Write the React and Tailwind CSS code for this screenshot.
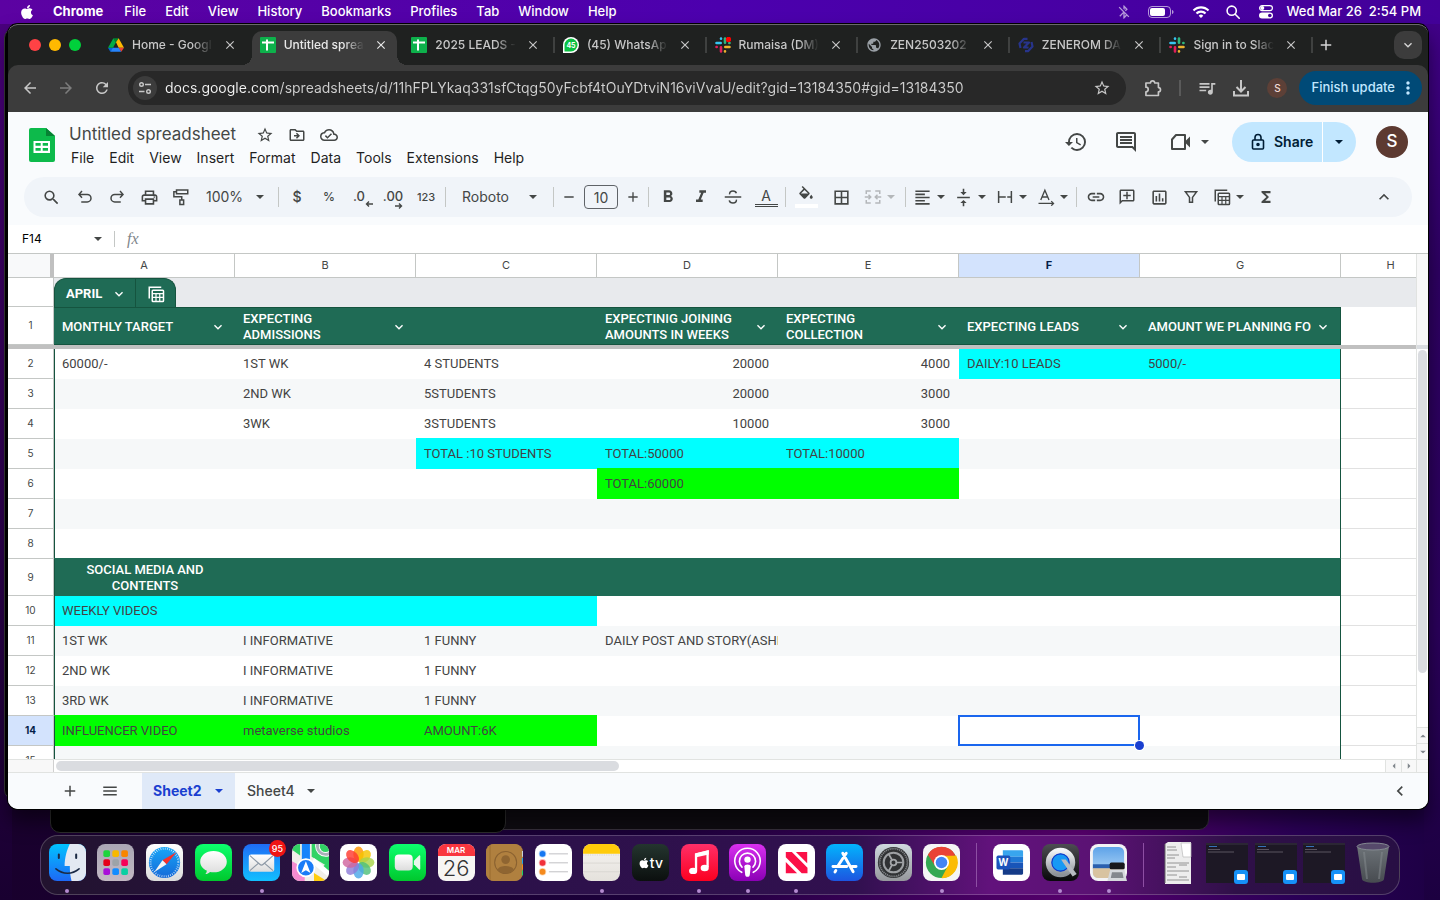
import React from "react";
import {
  MdSearch, MdOutlinePrint, MdFormatBold, MdFormatItalic, MdBorderAll, MdFormatAlignLeft,
  MdVerticalAlignCenter, MdLink, MdOutlineAddComment, MdOutlineInsertChart, MdHistory,
  MdOutlineComment, MdStarBorder, MdOutlineDriveFileMove, MdOutlineCloudDone,
  MdQueueMusic, MdAdd, MdRemove, MdClose, MdMenu,
  MdMoreVert, MdPublic, MdWifi, MdArrowBack, MdArrowForward, MdRefresh, MdExpandLess,
  MdExpandMore, MdChevronLeft, MdFunctions, MdBluetoothDisabled,
} from "react-icons/md";
import { FaApple } from "react-icons/fa";

/* ---------- small shared drawings ---------- */

function Caret({ className = "" }) {
  return (
    <svg viewBox="0 0 8 4" className={`h-1 w-2 shrink-0 ${className}`} fill="currentColor" aria-hidden="true">
      <path d="M0 0h8L4 4z" />
    </svg>
  );
}

function Glyph({ d, size = "size-5", stroke = false, children }) {
  return (
    <svg
      viewBox="0 0 24 24"
      className={size}
      fill={stroke ? "none" : "currentColor"}
      stroke={stroke ? "currentColor" : "none"}
      strokeWidth={stroke ? 2 : 0}
      aria-hidden="true"
    >
      {d ? <path d={d} /> : null}
      {children}
    </svg>
  );
}

const Sep = ({ className = "mx-0.5" }) => <span className={`h-5 w-px shrink-0 bg-[#c4c7c5] ${className}`} />;

/* ---------- menu bar ---------- */

const MENUS = ["File", "Edit", "View", "History", "Bookmarks", "Profiles", "Tab", "Window", "Help"];

function MenuBar() {
  return (
    <header className="flex h-6 shrink-0 items-center bg-[linear-gradient(90deg,#5c02a2,#4c00ae_50%,#430099)] pr-[19px] pl-[19px] text-[13px] font-medium text-white">
      <button aria-label="Apple menu" className="w-[34px]"><FaApple className="size-4" /></button>
      <nav className="flex items-center gap-[19px]">
        <button className="mr-0.5 font-bold">Chrome</button>
        {MENUS.map((m) => <button key={m}>{m}</button>)}
      </nav>
      <div className="ml-auto flex items-center">
        <MdBluetoothDisabled className="mr-4 size-4 opacity-60" />
        <svg viewBox="0 0 26 12" className="mr-[18px] h-3 w-[26px]" aria-hidden="true">
          <rect x=".5" y=".5" width="22" height="11" rx="3.5" fill="none" stroke="#fff" strokeOpacity=".6" />
          <rect x="2" y="2" width="15" height="8" rx="2" fill="#fff" />
          <path d="M24 4v4c1-.3 1.500-1 1.500-2S25 4.300 24 4z" fill="#fff" fillOpacity=".6" />
        </svg>
        <MdWifi className="mr-4 size-[18px]" />
        <svg viewBox="0 0 14 14" className="mr-[18px] size-[14px]" fill="none" stroke="#fff" strokeWidth="1.600" aria-hidden="true">
          <circle cx="5.700" cy="5.700" r="4.600" /><path d="M9.200 9.200l4 4" strokeLinecap="round" />
        </svg>
        <svg viewBox="0 0 16 14" className="mr-3 h-[14px] w-4" aria-hidden="true">
          <rect x="1.600" y=".6" width="12.800" height="5" rx="2.500" fill="none" stroke="#fff" strokeWidth="1.200" />
          <circle cx="4.300" cy="3.100" r="2" fill="#fff" />
          <rect x="1" y="7.500" width="14" height="6" rx="3" fill="#fff" />
          <circle cx="11.800" cy="10.500" r="1.800" fill="#430099" />
        </svg>
        <time className="whitespace-pre">Wed Mar 26  2:54 PM</time>
      </div>
    </header>
  );
}

/* ---------- browser tabs ---------- */

const DriveIcon = () => (
  <svg viewBox="0 0 24 24" className="size-4" aria-hidden="true">
    <path fill="#0066da" d="M0 16l3.500 6 5-6z" /><path fill="#00ac47" d="M8 2L0 16h7.500L12 8z" />
    <path fill="#00832d" d="M8 2h8l-4 7z" /><path fill="#ffba00" d="M16 2l8 14h-8L12 8z" />
    <path fill="#2684fc" d="M7.500 16h9L20 22H3.500z" /><path fill="#ea4335" d="M16 16h8l-4 6z" />
  </svg>
);
const SheetsFav = () => (
  <svg viewBox="0 0 16 16" className="size-4" aria-hidden="true">
    <rect width="16" height="16" rx="1" fill="#0db14b" />
    <path d="M2 5.500h12M7 2.500v11" stroke="#fff" strokeWidth="2" />
  </svg>
);
const WhatsFav = () => (
  <svg viewBox="0 0 16 16" className="size-4" aria-hidden="true">
    <path d="M0 16V8a8 8 0 118 8z" fill="#fff" /><path d="M1.500 14.500V8A6.500 6.500 0 118 14.500z" fill="#0bc143" />
    <text x="8" y="10.500" textAnchor="middle" fontSize="7" fontWeight="700" fill="#fff" fontFamily="Inter">45</text>
  </svg>
);
const SlackFav = ({ dot }) => (
  <svg viewBox="0 0 16 16" className="size-4" aria-hidden="true">
    <g fill="none" strokeWidth="2.600" strokeLinecap="round">
      <path d="M1.500 6h4.200M6 1.500v.2" stroke="#36c5f0" /><path d="M10 1.500v4.300M14.300 6h.2" stroke="#2eb67d" />
      <path d="M10.300 10h4.200M10 14.300v.2" stroke="#ecb22e" /><path d="M6 10.200v4.300M1.500 10h.2" stroke="#e01e5a" />
    </g>
    {dot ? <circle cx="13.500" cy="2.500" r="2.700" fill="#f00" /> : null}
  </svg>
);
const ZenFav = () => (
  <svg viewBox="0 0 16 16" className="size-4" fill="none" stroke="#27348b" strokeWidth="2.200" strokeLinejoin="round" aria-hidden="true">
    <path d="M9.500 1.800L6 1.800 1.500 6.500 2.500 11M5.500 5.500h5.500L6 10.500h4.500M13.500 5l1 4.500-4.500 4.700H7" />
  </svg>
);

const TABS = [
  { t: "Home - Googl", icon: <DriveIcon /> },
  { t: "Untitled sprea", icon: <SheetsFav />, active: true },
  { t: "2025 LEADS -", icon: <SheetsFav />, sep: true },
  { t: "(45) WhatsAp", icon: <WhatsFav />, sep: true },
  { t: "Rumaisa (DM)", icon: <SlackFav dot />, sep: true },
  { t: "ZEN2503202", icon: <MdPublic className="size-4 text-[#9aa0a6]" />, sep: true },
  { t: "ZENEROM DA", icon: <ZenFav />, sep: true },
  { t: "Sign in to Slac", icon: <SlackFav />, sep: true },
];

function TabStrip() {
  return (
    <div className="flex h-10 items-end bg-[#1f2120]">
      <div className="flex h-full w-[92px] shrink-0 items-center gap-2 pl-[21px]">
        <button aria-label="Close window" className="size-3 rounded-full bg-[#ff4245]" />
        <button aria-label="Minimise window" className="size-3 rounded-full bg-[#ffb900]" />
        <button aria-label="Zoom window" className="size-3 rounded-full bg-[#00d03b]" />
      </div>
      <div className="flex min-w-0 flex-1">
        {TABS.map((tab) => (
          <div key={tab.t} className="relative flex h-[34px] min-w-0 flex-1 pr-[6px]">
            <div
              className={`relative flex h-full min-w-0 flex-1 items-center pr-2 pb-[6px] pl-2 ${
                tab.active ? "rounded-t-[10px] bg-[#3c3c3c] text-[#e8e8e8]" : "text-[#c7c7c7]"
              }`}
            >
              {tab.active && (
                <>
                  <span className="absolute bottom-0 -left-[10px] size-[10px] bg-[radial-gradient(circle_at_0_0,transparent_10px,#3c3c3c_10px)]" />
                  <span className="absolute -right-[10px] bottom-0 size-[10px] bg-[radial-gradient(circle_at_100%_0,transparent_10px,#3c3c3c_10px)]" />
                </>
              )}
              <span className="shrink-0">{tab.icon}</span>
              <span className="ml-2 min-w-0 flex-1 overflow-hidden text-xs font-medium whitespace-nowrap [mask-image:linear-gradient(90deg,#000_75%,transparent)]">
                {tab.t}
              </span>
              <button aria-label={`Close ${tab.t}`} className="ml-[9px] flex size-4 shrink-0 items-center justify-center">
                <MdClose className="size-[14px]" />
              </button>
            </div>
            {tab.sep && <span className="absolute top-[6px] right-0 h-4 w-[2px] bg-[#3f4140]" />}
          </div>
        ))}
      </div>
      <div className="flex h-full w-[115px] shrink-0 items-center justify-between pr-[6px] pl-1 text-[#d5d5d5]">
        <button aria-label="New tab"><MdAdd className="size-[18px]" /></button>
        <button aria-label="Search tabs" className="flex size-7 items-center justify-center rounded-[10px] bg-[#3c3c3c]">
          <MdExpandMore className="size-4" />
        </button>
      </div>
    </div>
  );
}

function AddressBar() {
  return (
    <div className="flex h-[47px] items-center rounded-t-[10px] bg-[#3c3c3c] pr-[6px] pb-px text-[#c7c7c7]">
      <button aria-label="Back" className="ml-1 flex w-9 justify-center"><MdArrowBack className="size-[18px]" /></button>
      <button aria-label="Forward" className="flex w-9 justify-center text-[#7d7d7d]"><MdArrowForward className="size-[18px]" /></button>
      <button aria-label="Reload" className="flex w-9 justify-center"><MdRefresh className="size-[18px]" /></button>
      <div className="ml-2 flex h-[34px] min-w-0 flex-1 items-center rounded-full bg-[#282828] pr-[15px] pl-[5px]">
        <button aria-label="View site information" className="flex size-6 shrink-0 items-center justify-center rounded-full bg-[#3c3c3c]">
          <svg viewBox="0 0 14 14" className="size-[14px]" fill="none" stroke="currentColor" strokeWidth="1.400" aria-hidden="true">
            <circle cx="3.500" cy="3.500" r="1.800" /><path d="M7 3.500h6M1 10.500h5.500" /><circle cx="10.500" cy="10.500" r="1.800" />
          </svg>
        </button>
        <input
          aria-label="Address"
          defaultValue="docs.google.com/spreadsheets/d/11hFPLYkaq331sfCtqg50yFcbf4tOuYDtviN16viVvaU/edit?gid=13184350#gid=13184350"
          className="ml-2 min-w-0 flex-1 bg-[linear-gradient(90deg,#f2f2f2_112px,#cfcfcf_112px)] bg-clip-text text-sm text-transparent outline-none"
        />
        <button aria-label="Bookmark this tab"><MdStarBorder className="size-[18px]" /></button>
      </div>
      <button aria-label="Extensions" className="ml-[17px]">
        <Glyph size="size-5" stroke><path d="M3.500 6H9a2.500 2.500 0 015 0h4.500v5.500a2.500 2.500 0 010 5V21h-15v-4.500a2.700 2.700 0 000-5.500z" strokeLinejoin="round" /></Glyph>
      </button>
      <span className="mx-4 h-4 w-[2px] bg-[#5a5a5a]" />
      <button aria-label="Media controls"><MdQueueMusic className="size-5" /></button>
      <button aria-label="Downloads" className="ml-3">
        <Glyph size="size-6" stroke><path d="M12 4v11.500M7.500 11l4.500 4.500 4.500-4.500M5 15v4.500h14V15" /></Glyph>
      </button>
      <button aria-label="Profile" className="ml-[14px] flex size-5 items-center justify-center rounded-full bg-[#5d4037] text-[10px] font-medium text-[#f0dcd5]">S</button>
      <button className="ml-3 flex h-[34px] items-center rounded-full bg-[#004a77] pr-1 pl-3 text-[13px] font-medium text-[#c2e7ff]">
        Finish update<MdMoreVert className="ml-[3px] size-5" />
      </button>
    </div>
  );
}

/* ---------- spreadsheet header ---------- */

const DOC_MENUS = ["File", "Edit", "View", "Insert", "Format", "Data", "Tools", "Extensions", "Help"];

function DocHeader() {
  return (
    <div className="flex h-[65px] text-[#444746]">
      <a href="#home" aria-label="Sheets home" className="mt-4 ml-[21px]">
        <svg viewBox="0 0 26 34" className="h-[34px] w-[26px]" aria-hidden="true">
          <path d="M2 0h15l9 8v24a2 2 0 01-2 2H2a2 2 0 01-2-2V2a2 2 0 012-2z" fill="#0dba4b" />
          <path d="M17 0l9 8h-9z" fill="#078234" />
          <path d="M4.500 13h16.500v12H4.500zM6.500 15v2.800h5.200V15zm7.200 0v2.800H19V15zm-7.200 5v2.800h5.200V20zm7.200 0v2.800H19V20z" fill="#fff" fillRule="evenodd" />
        </svg>
      </a>
      <div className="ml-[14px] pt-3">
        <div className="flex h-[22px] items-center">
          <h1 className="text-[17px]">Untitled spreadsheet</h1>
          <button aria-label="Star" className="ml-5"><MdStarBorder className="size-[18px]" /></button>
          <button aria-label="Move" className="ml-[14px]"><MdOutlineDriveFileMove className="size-[18px]" /></button>
          <button aria-label="See document status" className="ml-[14px]"><MdOutlineCloudDone className="size-[18px]" /></button>
        </div>
        <nav className="flex h-6 items-center gap-[15px] pl-0.5 text-sm text-[#1f1f1f]">
          {DOC_MENUS.map((m) => <button key={m}>{m}</button>)}
        </nav>
      </div>
      <div className="ml-auto flex h-[60px] items-center pr-5">
        <button aria-label="Version history"><MdHistory className="size-6" /></button>
        <button aria-label="Comments" className="ml-[26px]"><MdOutlineComment className="size-6" /></button>
        <button aria-label="Join a call" className="ml-8 flex items-center gap-1">
          <svg viewBox="0 0 22 18" className="h-[18px] w-[22px]" aria-hidden="true">
            <path d="M6 2h9v14H2V6.500z" fill="none" stroke="currentColor" strokeWidth="2" strokeLinejoin="round" /><path d="M15.500 8L20 3.500v11L15.500 10z" fill="currentColor" />
          </svg>
          <Caret className="ml-[5px]" />
        </button>
        <div className="ml-[23px] flex h-10 overflow-hidden rounded-full bg-[#c2e7ff] text-sm font-semibold text-[#001d35]">
          <button className="flex w-[90px] items-center pl-[19px]">
            <svg viewBox="0 0 14 18" className="mr-[9px] h-[18px] w-[14px]" fill="none" stroke="currentColor" strokeWidth="1.600" aria-hidden="true">
              <rect x="1.500" y="7" width="11" height="9" rx="1" /><path d="M4 7V4.500a3 3 0 016 0V7" /><circle cx="7" cy="11.500" r="1" fill="currentColor" />
            </svg>
            Share
          </button>
          <button aria-label="Quick sharing actions" className="flex w-[34px] items-center border-l border-white pl-3"><Caret /></button>
        </div>
        <button aria-label="Google account" className="ml-5 flex size-8 items-center justify-center rounded-full bg-[#5d3a31] text-[17px] font-medium text-white">S</button>
      </div>
    </div>
  );
}

function Tool({ label, w = "w-8", children }) {
  return (
    <button aria-label={label} className={`flex h-8 shrink-0 items-center justify-center ${w}`}>{children}</button>
  );
}
function DropTool({ label, muted, children }) {
  return (
    <button aria-label={label} className={`flex h-8 w-[41px] shrink-0 items-center ${muted ? "text-[#b4b7ba]" : ""}`}>
      <span className="flex w-[29px] justify-center">{children}</span>
      <Caret />
    </button>
  );
}

const TableGlyph = ({ size }) => (
  <Glyph size={size} stroke>
    <path d="M3 18V3h16" /><rect x="7" y="7" width="15" height="15" rx="1" /><path d="M7 11.500h15M7 16.500h15M12 12v10M17 12v10" strokeWidth="1.600" />
  </Glyph>
);

function Toolbar() {
  return (
    <div className="mx-4 flex h-10 items-center overflow-hidden rounded-full bg-[#f0f4f9] pr-3 pl-[10px] text-[#444746]">
      <Tool label="Search the menus" w="w-[35px]"><MdSearch className="size-[19px]" /></Tool>
      <Tool label="Undo">
        <Glyph size="size-[18px]" stroke><path d="M8 4L4 8.500 8 13M4.500 8.500H15a5 5 0 010 10H7" /></Glyph>
      </Tool>
      <Tool label="Redo">
        <Glyph size="size-[18px]" stroke><path d="M16 4l4 4.500-4 4.500M19.500 8.500H9a5 5 0 000 10h8" /></Glyph>
      </Tool>
      <Tool label="Print"><MdOutlinePrint className="size-[19px]" /></Tool>
      <Tool label="Paint format">
        <Glyph size="size-[18px]" stroke><path d="M6 2.500h15v5H6zM6 5H2.500v6.500h10.500V16M10.500 16h5v6h-5z" /></Glyph>
      </Tool>
      <div className="relative flex h-8 w-[79px] shrink-0 items-center">
        <select aria-label="Zoom" className="w-full appearance-none bg-transparent pl-[9px] text-sm outline-none"><option>100%</option></select>
        <Caret className="pointer-events-none absolute right-3" />
      </div>
      <Sep />
      <Tool label="Format as currency"><span className="text-sm font-medium">$</span></Tool>
      <Tool label="Format as percent"><span className="text-xs font-medium">%</span></Tool>
      <Tool label="Decrease decimal places">
        <span className="relative pr-1 text-[13px] font-medium">.0
          <svg viewBox="0 0 8 6" className="absolute -right-1 bottom-0 h-[6px] w-2" fill="none" stroke="currentColor" strokeWidth="1.400" aria-hidden="true"><path d="M8 3H1.500M4 .5L1.500 3 4 5.500" /></svg>
        </span>
      </Tool>
      <Tool label="Increase decimal places">
        <span className="relative text-[13px] font-medium">.00
          <svg viewBox="0 0 8 6" className="absolute right-0 -bottom-0.5 h-[6px] w-2" fill="none" stroke="currentColor" strokeWidth="1.400" aria-hidden="true"><path d="M0 3h6.500M4 .5L6.500 3 4 5.500" /></svg>
        </span>
      </Tool>
      <Tool label="More formats" w="w-[34px]"><span className="text-[11px] font-medium">123</span></Tool>
      <Sep />
      <div className="relative flex h-8 w-[103px] shrink-0 items-center">
        <select aria-label="Font" className="w-full appearance-none bg-transparent pl-[14px] text-sm outline-none"><option>Roboto</option></select>
        <Caret className="pointer-events-none absolute right-[14px]" />
      </div>
      <Sep />
      <Tool label="Decrease font size" w="w-[26px]"><MdRemove className="size-4" /></Tool>
      <input aria-label="Font size" defaultValue="10" className="mx-[2px] h-6 w-[34px] shrink-0 rounded-[4px] border border-[#5f6368] bg-transparent text-center text-sm outline-none" />
      <Tool label="Increase font size" w="w-[26px]"><MdAdd className="size-4" /></Tool>
      <Sep />
      <Tool label="Bold" w="w-[34px]"><MdFormatBold className="size-5" /></Tool>
      <Tool label="Italic"><MdFormatItalic className="size-5" /></Tool>
      <Tool label="Strikethrough">
        <Glyph size="size-[18px]" stroke><path d="M1 12h22M7.500 8.500C7 5.500 9 4 12 4c2.500 0 4 1 4.500 3M16.500 15.500c.5 3-1.500 4.500-4.500 4.500-2.500 0-4.500-1-5-3.500" /></Glyph>
      </Tool>
      <Tool label="Text colour" w="w-[34px]">
        <span className="flex w-[23px] flex-col items-center border-b border-[#444746] pb-px">
          <span className="w-full border-b border-[#444746] text-center text-sm leading-4">A</span>
        </span>
      </Tool>
      <Sep />
      <Tool label="Fill colour" w="w-[36px]">
        <span className="flex w-[23px] flex-col items-center border-b-4 border-white">
          <Glyph size="size-[18px]" d="M16.560 8.940L7.620 0 6.210 1.410l2.380 2.380-5.150 5.150a1.490 1.490 0 000 2.120l5.500 5.500c.29.29.68.44 1.060.44s.77-.15 1.060-.44l5.500-5.500c.59-.58.59-1.530 0-2.120zM5.210 10L10 5.210 14.790 10H5.210zM19 11.500s-2 2.170-2 3.500c0 1.100.9 2 2 2s2-.9 2-2c0-1.330-2-3.500-2-3.500z" />
        </span>
      </Tool>
      <Tool label="Borders" w="w-[34px]"><MdBorderAll className="size-[19px]" /></Tool>
      <DropTool label="Merge cells" muted>
        <Glyph size="size-[18px]" stroke><path d="M9 4H3v4M15 4h6v4M9 20H3v-4M15 20h6v-4M1 12h8M6 9l3 3-3 3M23 12h-8M18 9l-3 3 3 3" /></Glyph>
      </DropTool>
      <Sep className="mr-0.5 ml-1.5" />
      <DropTool label="Horizontal align"><MdFormatAlignLeft className="size-[19px]" /></DropTool>
      <DropTool label="Vertical align"><MdVerticalAlignCenter className="size-[19px]" /></DropTool>
      <DropTool label="Text wrapping">
        <Glyph size="size-[18px]" stroke><path d="M3.500 4v16M20.500 4v16M4 12h9M15 12h5" /></Glyph>
      </DropTool>
      <DropTool label="Text rotation">
        <Glyph size="size-[18px]" stroke><path d="M5 16l5.500-13L16 16M7 12h7M2 20.500h20M19 17.500l3 3-3 3" strokeWidth="1.800" /></Glyph>
      </DropTool>
      <Sep className="mx-1" />
      <Tool label="Insert link" w="w-[30px]"><MdLink className="size-5" /></Tool>
      <Tool label="Insert comment"><MdOutlineAddComment className="size-[18px] -scale-x-100" /></Tool>
      <Tool label="Insert chart"><MdOutlineInsertChart className="size-[19px]" /></Tool>
      <Tool label="Create a filter">
        <Glyph size="size-[18px]" stroke><path d="M4.500 5h15L14 12.500V19h-4v-6.500z" /></Glyph>
      </Tool>
      <DropTool label="Table views"><TableGlyph size="size-[18px]" /></DropTool>
      <Tool label="Functions" w="w-[36px]"><MdFunctions className="size-[18px]" /></Tool>
      <div className="ml-auto"><Tool label="Hide the menus"><MdExpandLess className="size-5" /></Tool></div>
    </div>
  );
}

function FormulaBar() {
  return (
    <div className="mt-2 flex h-7 items-center bg-white text-[#444746]">
      <input aria-label="Name box" defaultValue="F14" className="w-[86px] pl-[14px] text-xs text-black outline-none" />
      <button aria-label="Named ranges"><Caret /></button>
      <span className="ml-3 h-4 w-px bg-[#c4c7c5]" />
      <label htmlFor="formula" className="ml-3 font-['Liberation_Serif',serif] text-base text-[#80868b] italic">fx</label>
      <input id="formula" className="min-w-0 flex-1 pl-3 text-xs outline-none" />
    </div>
  );
}

/* ---------- the grid ---------- */

const C = "bg-[#00ffff] shadow-[0_-1px_0_#00ffff]";
const G = "bg-[#00ff00] shadow-[0_-1px_0_#00ff00]";
const GREEN = "bg-[#1f6b55] shadow-[0_-1px_0_#1f6b55]";

const ROWS = [
  { n: 2, cells: ["60000/-", "1ST WK", "4 STUDENTS", "20000", "4000", "DAILY:10 LEADS", "5000/-"], fill: { 5: "bg-[#00ffff]", 6: "bg-[#00ffff]" } },
  { n: 3, cells: ["", "2ND WK", "5STUDENTS", "20000", "3000", "", ""] },
  { n: 4, cells: ["", "3WK", "3STUDENTS", "10000", "3000", "", ""] },
  { n: 5, cells: ["", "", "TOTAL :10 STUDENTS", "TOTAL:50000", "TOTAL:10000", "", ""], fill: { 2: C, 3: C, 4: C } },
  { n: 6, cells: ["", "", "", "TOTAL:60000", "", "", ""], fill: { 3: G, 4: G } },
  { n: 7, cells: ["", "", "", "", "", "", ""] },
  { n: 8, cells: ["", "", "", "", "", "", ""] },
  { n: 9, section: true },
  { n: 10, cells: ["WEEKLY VIDEOS", "", "", "", "", "", ""], fill: { 0: "bg-[#00ffff]", 1: "bg-[#00ffff]", 2: "bg-[#00ffff]" } },
  { n: 11, cells: ["1ST WK", "I INFORMATIVE", "1 FUNNY", "DAILY POST AND STORY(ASHNA)", "", "", ""] },
  { n: 12, cells: ["2ND WK", "I INFORMATIVE", "1 FUNNY", "", "", "", ""] },
  { n: 13, cells: ["3RD WK", "I INFORMATIVE", "1 FUNNY", "", "", "", ""] },
  { n: 14, cells: ["INFLUENCER VIDEO", "metaverse studios", "AMOUNT:6K", "", "", "", ""], fill: { 0: G, 1: G, 2: G } },
  { n: 15, cells: ["", "", "", "", "", "", ""] },
];

const HEADS = ["MONTHLY TARGET", "EXPECTING ADMISSIONS", "", "EXPECTINIG JOINING AMOUNTS IN WEEKS", "EXPECTING COLLECTION", "EXPECTING LEADS", "AMOUNT WE PLANNING FO"];

function RowHead({ n, selected }) {
  return (
    <th
      scope="row"
      className={`border-r border-b border-[#c4c7c5] p-0 text-center font-['Inter',sans-serif] text-[10px] ${
        selected ? "bg-[#d3e3fd] font-bold text-[#041e49]" : "bg-white font-normal text-[#444746]"
      }`}
    >
      {n}
    </th>
  );
}

function Grid() {
  return (
    <table className="w-[1433px] shrink-0 table-fixed border-separate border-spacing-0 self-start">
      <colgroup>
        <col className="w-[46px]" />
        {[0, 1, 2, 3, 4, 5].map((i) => <col key={i} className="w-[181px]" />)}
        <col className="w-[201px]" />
        <col className="w-[100px]" />
      </colgroup>
      <thead>
        <tr className="h-6">
          <td className="border-r-4 border-b border-r-[#c0c0c0] border-b-[#c4c7c5] bg-[#f8f9fa] p-0" />
          {["A", "B", "C", "D", "E", "F", "G", "H"].map((c) => (
            <th
              key={c}
              scope="col"
              className={`border-r border-b border-[#c4c7c5] p-0 text-center text-[11px] ${
                c === "F" ? "bg-[#d3e3fd] font-bold text-[#041e49]" : "bg-white font-normal text-[#444746]"
              }`}
            >
              {c}
            </th>
          ))}
        </tr>
        <tr className="h-[29px]">
          <td className="border-r border-b border-[#c4c7c5] bg-white p-0" />
          <td colSpan={8} className="bg-[#e8eaed] p-0">
            <div className="flex h-[29px] w-[122px] rounded-t-xl border border-b-0 border-[#15543f] bg-[#1f6b55] text-white">
              <button className="flex w-[81px] items-center justify-between border-r border-[#15543f] pt-px pr-2 pl-[11px] font-['Roboto',sans-serif] text-[13px] font-bold">
                APRIL<MdExpandMore className="size-4" />
              </button>
              <button aria-label="Table options" className="flex flex-1 items-center justify-center pt-px"><TableGlyph size="size-[18px]" /></button>
            </div>
          </td>
        </tr>
        <tr className="h-[38px] font-['Roboto',sans-serif]">
          <RowHead n={1} />
          {HEADS.map((h, i) => (
            <th
              key={i}
              scope="col"
              className={`border-y border-[#15543f] bg-[#1f6b55] p-0 text-left text-[13px] leading-4 font-medium text-white ${
                i === 6 ? "border-r" : ""
              }`}
            >
              <div className="flex items-center justify-between pt-0.5 pr-[9px] pl-2">
                <span className={i === 6 ? "whitespace-nowrap" : "max-w-[136px]"}>{h}</span>
                {h && <button aria-label={`Filter ${h}`}><MdExpandMore className="size-4" /></button>}
              </div>
            </th>
          ))}
          <td className="bg-white p-0" />
        </tr>
        <tr className="h-1"><td colSpan={9} className="h-1 bg-[#c0c0c0] p-0" /></tr>
      </thead>
      <tbody className="font-['Roboto',sans-serif] text-[13px] text-[#434343]">
        {ROWS.map((row) => {
          if (row.section) {
            return (
              <tr key={row.n} className="h-[37px]">
                <RowHead n={row.n} />
                <td className={`border-l border-[#15543f] px-6 py-0 text-center leading-4 font-medium text-white ${GREEN}`}>SOCIAL MEDIA AND CONTENTS</td>
                <td colSpan={6} className={`border-r border-[#15543f] p-0 ${GREEN}`} />
                <td className="border-b border-[#e1e1e1] bg-white p-0" />
              </tr>
            );
          }
          const band = row.n % 2 === 1 ? "bg-[#f6f8f9]" : "bg-white";
          return (
            <tr key={row.n} className="h-[30px]">
              <RowHead n={row.n} selected={row.n === 14} />
              {row.cells.map((text, i) => {
                const numeric = /^\d+$/.test(text);
                const edge = i === 0 ? "border-l border-[#15543f]" : i === 6 ? "border-r border-[#15543f]" : "";
                const selected = row.n === 14 && i === 5;
                return (
                  <td
                    key={i}
                    className={`p-0 ${selected ? "relative" : ""} ${edge} ${(row.fill && row.fill[i]) || band} ${numeric ? "text-right" : ""}`}
                  >
                    <div className={`overflow-hidden whitespace-nowrap ${i === 0 ? "pl-[7px]" : "pl-2"} ${numeric ? "pr-[9px]" : ""}`}>{text}</div>
                    {selected && (
                      <span className="absolute -top-px -left-px z-10 h-[31px] w-[182px] border-2 border-[#1a66ee]">
                        <span className="absolute -right-[6px] -bottom-[6px] size-[9px] rounded-full bg-[#1a3fd0] ring-1 ring-white" />
                      </span>
                    )}
                  </td>
                );
              })}
              <td className="border-b border-[#e1e1e1] bg-white p-0" />
            </tr>
          );
        })}
      </tbody>
    </table>
  );
}

function Sheet() {
  return (
    <>
      <div className="flex min-h-0 flex-1 border-t border-[#c4c7c5]">
        <div className="flex min-w-0 flex-1 overflow-hidden"><Grid /></div>
        <div className="flex w-3 shrink-0 flex-col border-l border-[#e1e3e1] bg-white">
          <div className="h-[95px] shrink-0 border-b-4 border-[#d9dce0] bg-[#f8f8f8]" />
          <div className="min-h-0 flex-1 px-px pt-px pb-[54px]"><div className="h-full rounded-full bg-[#dadce0]" /></div>
          <button aria-label="Scroll up" className="flex h-4 items-center justify-center border-t border-[#e1e3e1] bg-[#f8f8f8] text-[#80868b]"><Caret className="scale-75 rotate-180" /></button>
          <button aria-label="Scroll down" className="flex h-4 items-center justify-center border-t border-[#e1e3e1] bg-[#f8f8f8] text-[#80868b]"><Caret className="scale-75" /></button>
        </div>
      </div>
      <div className="flex h-[14px] shrink-0 border-y border-[#e1e3e1] bg-white">
        <div className="w-[46px] border-r border-[#d0d0d0] bg-[#f8f8f8]" />
        <div className="flex-1 py-px pl-[2px]"><div className="h-full w-[563px] rounded-full bg-[#dadce0]" /></div>
        <button aria-label="Scroll left" className="flex w-4 items-center justify-center border-l border-[#e1e3e1] bg-[#f8f8f8] text-[#80868b]"><Caret className="scale-75 rotate-90" /></button>
        <button aria-label="Scroll right" className="flex w-[15px] items-center justify-center border-l border-[#e1e3e1] bg-[#f8f8f8] text-[#80868b]"><Caret className="scale-75 -rotate-90" /></button>
        <div className="w-3 border-l border-[#e1e3e1] bg-[#f8f8f8]" />
      </div>
      <footer className="flex h-9 shrink-0 items-center bg-[#f9fbfd] text-sm font-medium text-[#444746]">
        <button aria-label="Add sheet" className="ml-[53px]"><MdAdd className="size-[18px]" /></button>
        <button aria-label="All sheets" className="ml-[22px]"><MdMenu className="size-[18px]" /></button>
        <button className="ml-[23px] flex h-full w-[93px] items-center justify-between bg-[#dfe9f8] pr-3 pl-[11px] font-bold text-[#1a3fd0]">Sheet2<Caret /></button>
        <button className="ml-3 flex items-center gap-3">Sheet4<Caret /></button>
        <button aria-label="Show side panel" className="mr-[18px] ml-auto"><MdChevronLeft className="size-5" /></button>
      </footer>
    </>
  );
}

/* ---------- dock ---------- */

const App64 = ({ fill, children }) => (
  <svg viewBox="0 0 64 64" className="size-[37px]" aria-hidden="true">
    <rect width="64" height="64" rx="14" fill={fill} />
    {children}
  </svg>
);

const Defs = () => (
  <svg className="absolute size-0" aria-hidden="true">
    <defs>
      {[
        ["gFinder", "#00c3ff", "#1e68f5"], ["gWhite", "#ffffff", "#dcdcdc"], ["gGreen", "#0cff6e", "#00c82d"],
        ["gMail", "#1f6cf5", "#12c0ff"], ["gMusic", "#ff2f68", "#fb0020"], ["gPod", "#d930f0", "#8b00b5"],
        ["gStore", "#02b4fd", "#1d55e0"], ["gTv", "#24352f", "#0b0f0e"], ["gSet", "#cfd9de", "#96989c"],
        ["gSaf", "#18a6f7", "#1569d8"], ["gQt", "#4d4d52", "#08080a"], ["gQ", "#f2f4f6", "#8d9298"],
        ["gSky", "#5da2e8", "#bfe0fa"], ["gCan", "#6d7378", "#474b50"], ["gLp", "#aaa6b4", "#c3b9c4"], ["gNote", "#f6f4f1", "#e4e1dc"],
      ].map(([id, a, b]) => (
        <linearGradient key={id} id={id} x1="0" y1="0" x2="0" y2="1"><stop offset="0" stopColor={a} /><stop offset="1" stopColor={b} /></linearGradient>
      ))}
    </defs>
  </svg>
);

const Finder = () => (
  <App64 fill="url(#gFinder)">
    <path d="M36 0h14a14 14 0 0114 14v36a14 14 0 01-14 14H39c-2-8-3-16-3-26h-9C27 24 31 10 36 0z" fill="#e3e9f2" />
    <path d="M17 18v6M47 18v6" stroke="#1b2a44" strokeWidth="3.500" strokeLinecap="round" />
    <path d="M12 43c12 10 28 10 40 0" stroke="#1b2a44" strokeWidth="2.800" fill="none" strokeLinecap="round" />
  </App64>
);
const Launchpad = () => (
  <App64 fill="url(#gLp)">
    {["#1fd43b", "#f8b800", "#f98500", "#e5001b", "#9da3a8", "#f70058", "#a90fd8", "#138cff", "#09cfa2"].map((c, i) => (
      <rect key={c} x={11 + (i % 3) * 15.500} y={11 + Math.floor(i / 3) * 15.500} width="11.500" height="11.500" rx="3" fill={c} />
    ))}
  </App64>
);
const Safari = () => (
  <App64 fill="url(#gWhite)">
    <circle cx="32" cy="32" r="27" fill="url(#gSaf)" /><circle cx="32" cy="32" r="24" fill="none" stroke="#fff" strokeWidth="3.500" strokeDasharray="1 2.770" />
    <path d="M53 14L28.500 28l7 7z" fill="#f7302b" /><path d="M14 49l14.500-21 7 7z" fill="#f4f4f4" />
  </App64>
);
const Messages = () => (
  <App64 fill="url(#gGreen)">
    <path d="M32 12c13 0 23 8 23 18.500S45 49 32 49c-2 0-4-.2-6-.7-2 2-5 3.500-8 3.700 2-2 2.500-4 2.300-6C13.500 43 9 37 9 30.500 9 20 19 12 32 12z" fill="url(#gWhite)" />
  </App64>
);
const Mail = () => (
  <App64 fill="url(#gMail)">
    <rect x="10" y="18" width="44" height="30" rx="4" fill="url(#gWhite)" />
    <path d="M12 20l17 15c2 2 4 2 6 0l17-15M12 46l15-13M52 46L37 33" fill="none" stroke="#8c98a5" strokeWidth="2" />
  </App64>
);
const Maps = () => (
  <svg viewBox="0 0 64 64" className="size-[37px]" aria-hidden="true">
    <clipPath id="mapClip"><rect width="64" height="64" rx="14" /></clipPath>
    <g clipPath="url(#mapClip)">
      <path d="M0 0h64v64H0z" fill="#f1efe9" /><path d="M34 0h30v40L34 22z" fill="#31d364" /><path d="M0 0h14v20L0 10z" fill="#31d364" />
      <path d="M0 30l22 12v22H0z" fill="#f58bd0" /><path d="M38 64V50l22 14z" fill="#ffcd0d" /><path d="M50 42l14 8V30z" fill="#31d364" />
      <path d="M36 28l28 24" stroke="#fff" strokeWidth="9" /><circle cx="58" cy="4" r="14" fill="none" stroke="#fff" strokeWidth="8" /><circle cx="58" cy="4" r="14" fill="none" stroke="#aab0b8" strokeWidth="5" />
      <path d="M17 0h14v34H17z" fill="#1683fb" />
    </g>
    <circle cx="24" cy="41" r="15" fill="#1a7cf7" stroke="#fff" strokeWidth="3" /><path d="M24 30l8 20-8-4.500-8 4.500z" fill="#fff" />
  </svg>
);
const Photos = () => (
  <App64 fill="#fff">
    {["#ff9500", "#f5c400", "#a8d34a", "#4fc07a", "#4ba7e8", "#8e7cd8", "#d0659f", "#ff3b30"].map((c, i) => (
      <ellipse key={c} cx="32" cy="17.500" rx="9" ry="13" fill={c} fillOpacity=".82" transform={`rotate(${i * 45} 32 32)`} />
    ))}
  </App64>
);
const FaceTime = () => (
  <App64 fill="url(#gGreen)">
    <rect x="10" y="18" width="31" height="28" rx="7" fill="url(#gWhite)" /><path d="M43 29l9-9c1-1 2-.6 2 1v22c0 1.600-1 2-2 1l-9-9z" fill="#e9f7ec" />
  </App64>
);
const Calendar = () => (
  <div className="flex size-[37px] flex-col items-center overflow-hidden rounded-lg bg-[#f7f5f3]">
    <span className="h-3 w-full bg-[#f9363f] text-center text-[8px] leading-3 font-semibold text-white">MAR</span>
    <span className="text-[22px] leading-6 font-light text-[#333]">26</span>
  </div>
);
const Contacts = () => (
  <App64 fill="#b0803f">
    <path d="M62 12h3v10h-3z" fill="#c9d3d8" /><path d="M62 24h3v10h-3z" fill="#20a5e8" /><path d="M62 36h3v8h-3z" fill="#f28a20" /><path d="M62 46h3v8h-3z" fill="#1fd06c" />
    <rect width="62" height="64" rx="14" fill="#b0803f" /><path d="M7 2v60" stroke="#98692d" strokeWidth="1.500" />
    <circle cx="34" cy="32" r="19" fill="none" stroke="#8a6130" strokeWidth="1.800" /><circle cx="34" cy="27" r="7.500" fill="#8f6531" /><path d="M20 44c3-8 25-8 28 0-7 9-21 9-28 0z" fill="#8f6531" />
  </App64>
);
const Reminders = () => (
  <App64 fill="#fff">
    {["#1577f2", "#f2303a", "#f58a1d"].map((c, i) => (
      <g key={c}><circle cx="13" cy={17 + i * 15.500} r="5" fill={c} stroke={c} strokeOpacity=".35" strokeWidth="3" /><path d={`M24 ${17 + i * 15.500}h33`} stroke="#c9c9cc" strokeWidth="2" /></g>
    ))}
  </App64>
);
const Notes = () => (
  <App64 fill="url(#gNote)">
    <path d="M0 17v-3A14 14 0 0114 0h36a14 14 0 0114 14v3z" fill="#ffcb0a" /><path d="M0 19h64" stroke="#c9c6c0" strokeDasharray="2 2" /><path d="M0 33h64M0 48h64" stroke="#cfccc7" />
  </App64>
);
const Tv = () => (
  <div className="flex size-[37px] items-center justify-center rounded-lg bg-[linear-gradient(#24352f,#0b0f0e)] text-[14px] font-medium text-white"><FaApple className="size-3" />tv</div>
);
const Music = () => (
  <App64 fill="url(#gMusic)">
    <path d="M26 46V18l20-5v27" fill="none" stroke="#fff" strokeWidth="4" /><path d="M24.500 16.500L48 11v7l-23.500 5.500z" fill="#fff" /><ellipse cx="21" cy="46.500" rx="7" ry="5.500" fill="#fff" /><ellipse cx="41" cy="41.500" rx="7" ry="5.500" fill="#fff" />
  </App64>
);
const Podcasts = () => (
  <App64 fill="url(#gPod)">
    <circle cx="32" cy="27" r="5.500" fill="#fff" /><path d="M26.500 39c0-5 11-5 11 0l-1.500 14c-.6 5-7.400 5-8 0z" fill="#fff" />
    <path d="M22 49a22 22 0 1120 0M22.500 40a14 14 0 1119 0" fill="none" stroke="#fff" strokeWidth="2.800" strokeLinecap="round" />
  </App64>
);
const News = () => (
  <App64 fill="#fff"><path d="M13.500 14H24l27 27v9.500H41L13.500 23zM31 14h19.500v19.500zM13.500 31L33 50.500H13.500z" fill="#fb1047" /></App64>
);
const Store = () => (
  <App64 fill="url(#gStore)">
    <g stroke="#fff" strokeWidth="5" strokeLinecap="round"><path d="M29 16l18 32M35 16L20 39M12 39h24M45 39h7M17 46l-1.500 2.500" /></g>
  </App64>
);
const Settings = () => (
  <App64 fill="url(#gSet)">
    <circle cx="32" cy="32" r="27" fill="#303234" /><circle cx="32" cy="32" r="24" fill="none" stroke="#85888b" strokeWidth="3" strokeDasharray="2 1.400" />
    <circle cx="32" cy="32" r="17" fill="none" stroke="#9da0a3" strokeWidth="3.500" /><circle cx="32" cy="32" r="5" fill="none" stroke="#a4a7aa" strokeWidth="3" />
    <path d="M36 32h12M30 28.500L24 18M30 35.500L24 46" stroke="#a4a7aa" strokeWidth="3" />
  </App64>
);
const Chrome = () => (
  <App64 fill="#f5f5f5">
    <circle cx="32" cy="32" r="27" fill="#34a853" /><path d="M32 32L8.600 18.500a27 27 0 0146.800 0z" fill="#ea4335" /><path d="M32 20h25.500a27 27 0 01-25.500 39l11-21z" fill="#fbbc04" />
    <path d="M8.600 18.500L21 38l11-18h23.500A27 27 0 008.600 18.500z" fill="#ea4335" />
    <circle cx="32" cy="32" r="13" fill="#fff" /><circle cx="32" cy="32" r="10" fill="#4285f4" />
  </App64>
);
const Word = () => (
  <App64 fill="#fff">
    <path d="M17 11h33a2 2 0 012 2v9H17z" fill="#38a5ee" /><path d="M17 22h35v10H17z" fill="#2079d6" /><path d="M17 32h35v10H17z" fill="#1955b8" /><path d="M17 42h35v9a2 2 0 01-2 2H17z" fill="#143b88" />
    <rect x="6" y="20" width="24" height="24" rx="3" fill="#1c53bb" /><text x="18" y="38" textAnchor="middle" fontSize="17" fontWeight="700" fill="#fff" fontFamily="Inter">W</text>
  </App64>
);
const QuickTime = () => (
  <App64 fill="url(#gQt)">
    <circle cx="32" cy="32" r="20.500" fill="#1799f4" stroke="url(#gQ)" strokeWidth="10" /><circle cx="32" cy="32" r="15" fill="none" stroke="#1238c8" strokeWidth="2" /><path d="M33 27h8l19 25-7 4z" fill="#b6bbc1" />
  </App64>
);
const Preview = () => (
  <App64 fill="#f2f2f4">
    <rect x="5" y="5" width="54" height="54" rx="9" fill="url(#gSky)" /><path d="M5 35h54v8H5z" fill="#2a5fae" /><path d="M5 42h54v8a9 9 0 01-9 9H14a9 9 0 01-9-9z" fill="#d8c3a0" />
    <rect x="34" y="32" width="26" height="12" rx="3" fill="#18181a" /><path d="M35 44h24l5 20H30z" fill="#d5d9dc" /><path d="M38 49h18l2 10H36z" fill="#83888d" />
  </App64>
);
const Papers = () => (
  <svg viewBox="0 0 28 44" className="h-11 w-7" aria-hidden="true">
    <path d="M1 3l3-2h23v42H1z" fill="#ededed" /><path d="M17 2h10v14h-8z" fill="#fff" stroke="#b9b9b9" strokeWidth=".7" />
    <path d="M3 6h9M3 9h10M3 14h12M3 17h8M3 22h22M3 26h9M15 24h8M3 30h22M3 34h10M15 36h8M3 39h22" stroke="#929292" />
    <path d="M1 3v39" stroke="#666" />
  </svg>
);
const MiniWindow = () => (
  <div className="relative h-10 w-[42px] bg-[#1d1825]">
    <svg viewBox="0 0 42 40" className="h-10 w-[42px]" aria-hidden="true"><path d="M0 1h42" stroke="#3a3444" /><path d="M3 3.500h8" stroke="#3671b8" /><path d="M2 6.500h12M2 9h26" stroke="#6a6570" strokeWidth=".8" /></svg>
    <span className="absolute right-0 -bottom-px flex size-[14px] items-center justify-center rounded-[3px] bg-[#1691f8]"><span className="h-[6px] w-2 rounded-[1px] bg-white" /></span>
  </div>
);
const Trash = () => (
  <svg viewBox="0 0 34 42" className="h-[42px] w-[34px]" aria-hidden="true">
    <path d="M1 4l5 33c1 5 21 5 22 0L33 4z" fill="url(#gCan)" /><ellipse cx="17" cy="4.500" rx="16" ry="3.500" fill="#56496b" stroke="#858a92" />
    <path d="M8 10l3 27M26 10l-3 27" stroke="#858b90" strokeOpacity=".5" strokeWidth="2" />
  </svg>
);

const DOCK = [
  ["Finder", Finder, true], ["Launchpad", Launchpad], ["Safari", Safari], ["Messages", Messages], ["Mail", Mail, true, "95"],
  ["Maps", Maps], ["Photos", Photos], ["FaceTime", FaceTime], ["Calendar", Calendar], ["Contacts", Contacts],
  ["Reminders", Reminders], ["Notes", Notes, true], ["TV", Tv], ["Music", Music, true], ["Podcasts", Podcasts, true],
  ["News", News, true], ["App Store", Store], ["System Settings", Settings], ["Chrome", Chrome, true], null,
  ["Word", Word], ["QuickTime Player", QuickTime, true], ["Preview", Preview, true], null,
  ["Documents", Papers], ["Mail window 1", MiniWindow], ["Mail window 2", MiniWindow], ["Mail window 3", MiniWindow], ["Trash", Trash],
];

function Dock() {
  return (
    <nav aria-label="Dock" className="mx-10 mt-[26px] mb-[5px] flex h-[60px] shrink-0 items-center rounded-[18px] border border-white/20 bg-[linear-gradient(90deg,#22132f,#2b1149_30%,#31104f_60%,#62127c_70%,#5a1273_78%,#2f1048_88%,#280f44)] px-[2px]">
      <Defs />
      {DOCK.map((item, i) => {
        if (!item) return <span key={i} className="mx-[10px] h-11 w-px shrink-0 bg-[#8d4fa3]" />;
        const [name, Icon, running, badge] = item;
        return (
          <button key={name} aria-label={name} className="relative flex h-full min-w-0 flex-1 items-center justify-center pb-[5px]">
            <Icon />
            {badge && <span className="absolute top-1 right-0 flex size-[17px] items-center justify-center rounded-full bg-[#f01414] text-[9px] font-medium text-white">{badge}</span>}
            {running && <span className="absolute bottom-px left-1/2 size-1 -translate-x-1/2 rounded-full bg-[#b48bd0]" />}
          </button>
        );
      })}
    </nav>
  );
}

export default function App() {
  return (
    <div className="relative isolate flex h-screen flex-col overflow-hidden bg-[linear-gradient(90deg,#19002d,#1b0039_45%,#3a0058_62%,#56006c_75%,#2a0056_90%,#1d0044)] font-['Inter',sans-serif]">
      <div className="absolute inset-y-0 left-0 -z-10 w-3 bg-[linear-gradient(#4b0080,#3b0063_30%,#190030)]" />
      <div className="absolute inset-y-0 right-0 -z-10 w-4 bg-[linear-gradient(#43008c,#2e0063_30%,#2b005c_70%,#1c0040)]" />
      <div className="absolute top-7 bottom-[100px] left-1 -z-10 w-20 rounded-[10px] border border-[#3a3a3a] bg-black" />
      <div className="absolute right-[231px] bottom-[70px] left-[480px] -z-10 h-20 rounded-b-[10px] border border-[#37303c] bg-[#0f0c12]" />
      <div className="absolute bottom-[67px] left-[50px] -z-10 h-20 w-[456px] rounded-b-[10px] border border-[#2c2c2c] bg-black" />
      <MenuBar />
      <main className="mr-3 ml-2 flex min-h-0 flex-1 flex-col overflow-hidden rounded-[10px] border-t border-[#6a6a6a] bg-[#f9fbfd] shadow-[0_0_0_1px_#000,0_12px_20px_rgba(0,0,0,0.5)]">
        <div className="shrink-0 bg-[#1f2120]"><TabStrip /><AddressBar /></div>
        <div className="shrink-0"><DocHeader /><Toolbar /><FormulaBar /></div>
        <Sheet />
      </main>
      <Dock />
    </div>
  );
}
